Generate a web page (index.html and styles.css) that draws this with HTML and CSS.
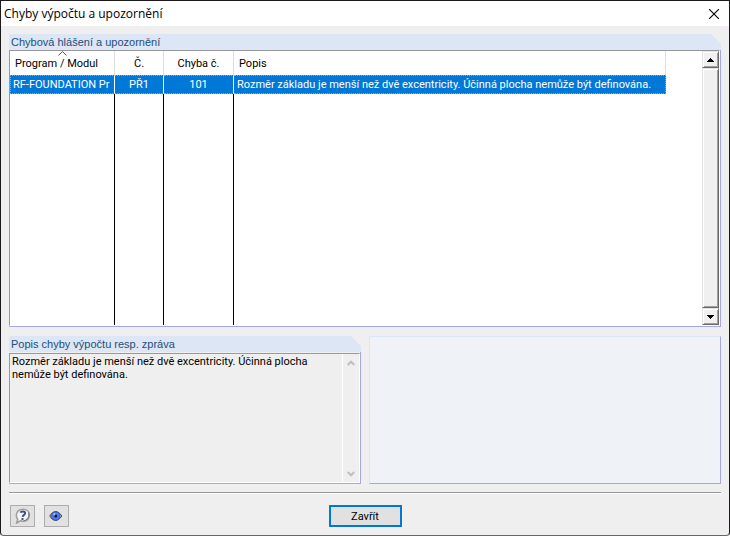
FILE: index.html
```
<!DOCTYPE html>
<html lang="cs">
<head>
	<meta charset="UTF-8" />
	<meta name="viewport" content="width=device-width, initial-scale=1.0" />
	<title>Chyby výpočtu a upozornění</title>
	<link rel="stylesheet" href="styles.css">
</head>
<body>
	<div class="dialog">
		<header class="titlebar">
			<h1>Chyby výpočtu a upozornění</h1>
			<button type="button" class="btn-close" aria-label="Zavřít okno">
				<svg viewBox="0 0 10 10" width="10" height="10"><path d="M0 0L10 10M10 0L0 10" stroke="#000" stroke-width="1.1"/></svg>
			</button>
		</header>

		<main class="content">
			<section class="panel panel-list">
				<h2 class="panel-title">Chybová hlášení a upozornění</h2>
				<div class="list">
					<div class="list-view">
						<table class="errors">
							<colgroup>
								<col class="col-program"><col class="col-no"><col class="col-error"><col class="col-desc">
							</colgroup>
							<thead>
								<tr>
									<th class="left sorted">Program / Modul
										<svg class="sort" viewBox="0 0 9 5" width="9" height="5"><path d="M.5 4.5L4.5 .5L8.5 4.5" fill="none" stroke="#555"/></svg>
									</th>
									<th>Č.</th>
									<th>Chyba č.</th>
									<th class="left">Popis</th>
								</tr>
							</thead>
							<tbody>
								<tr class="selected">
									<td class="left">RF-FOUNDATION Pr</td>
									<td>PŘ1</td>
									<td>101</td>
									<td class="left">Rozměr základu je menší než dvě excentricity. Účinná plocha nemůže být definována.</td>
								</tr>
								<tr class="filler"><td></td><td></td><td></td><td></td></tr>
							</tbody>
						</table>
					</div>
					<div class="scrollbar">
						<button type="button" class="raised" aria-label="Nahoru">
							<svg viewBox="0 0 7 4" width="7" height="4" shape-rendering="crispEdges"><path d="M3 0h1v1h1v1h1v1h1v1H0V3h1V2h1V1h1z"/></svg>
						</button>
						<div class="thumb raised"></div>
						<button type="button" class="raised" aria-label="Dolů">
							<svg viewBox="0 0 7 4" width="7" height="4" shape-rendering="crispEdges"><path d="M0 0h7v1H6v1H5v1H4v1H3V3H2V2H1V1H0z"/></svg>
						</button>
					</div>
				</div>
			</section>

			<div class="details">
				<section class="panel panel-message">
					<h2 class="panel-title">Popis chyby výpočtu resp. zpráva</h2>
					<div class="message">
						<p>Rozměr základu je menší než dvě excentricity. Účinná plocha nemůže být definována.</p>
						<div class="message-scroll">
							<svg viewBox="0 0 8 6" width="8" height="6"><path d="M.7 5L4 1.7L7.3 5" fill="none" stroke="#bfbfbf" stroke-width="2"/></svg>
							<svg viewBox="0 0 8 6" width="8" height="6"><path d="M.7 1L4 4.3L7.3 1" fill="none" stroke="#bfbfbf" stroke-width="2"/></svg>
						</div>
					</div>
				</section>
				<section class="preview"></section>
			</div>
		</main>

		<footer class="footer">
			<div class="tools">
				<button type="button" class="btn-tool" aria-label="Nápověda">
					<svg viewBox="0 0 16 16" width="16" height="16">
						<path d="M8 1.200C11.700 1.200 14.300 3.800 14.300 7.300S11.700 13.300 8 13.300C7 13.300 6.100 13.100 5.300 12.800L1.700 15L2.700 11.200C1.700 10.200 1.300 8.900 1.300 7.300C1.300 3.800 4.200 1.200 8 1.200Z" fill="#f6f6f6" stroke="#a0a0a0" stroke-width="1.600"/>
						<path d="M13.800 4.500C15 8 13 12.300 8.500 13" fill="none" stroke="#777" stroke-width="1.200"/>
						<path d="M5.400 4.700C6.100 3.200 10.200 3 10.100 5.300C10 7 8 6.800 7.600 8.900" fill="none" stroke="#3a5293" stroke-width="2"/>
						<rect x="6.500" y="10" width="2" height="2" fill="#3a5293"/>
					</svg>
				</button>
				<button type="button" class="btn-tool" aria-label="Zobrazit">
					<svg viewBox="0 0 16 16" width="16" height="16">
						<path d="M.8 8C3.800 2.200 9.200 2.200 12.800 8C9.200 13.800 3.800 13.800 .8 8Z" fill="#c0c0c0" stroke="#444" stroke-width="1"/>
						<circle cx="6.800" cy="8" r="4.200" fill="#4a7df2" stroke="#2a4aae" stroke-width=".8"/>
						<circle cx="6.800" cy="8" r="1.500" fill="#0b1238"/>
						<circle cx="5.300" cy="6.200" r="1" fill="#b9d0ff"/>
					</svg>
				</button>
			</div>
			<button type="button" class="btn-primary">Zavřít</button>
		</footer>
	</div>
</body>
</html>
```

FILE: styles.css
```
*{
	box-sizing: border-box;
}
body{
	margin: 0;
	background: #efefef;
	color: #000;
	font: 11px/13px Roboto, sans-serif;
}
h1, h2, p{
	margin: 0;
	font-weight: normal;
}
button{
	display: flex;
	align-items: center;
	justify-content: center;
	padding: 0;
	font: inherit;
	color: inherit;
}
.dialog{
	display: flex;
	flex-direction: column;
	min-height: 100vh;
	border: 1px solid #1c1a1c;
	border-bottom-color: #666;
	border-radius: 0 0 4px 4px;
}

/* title bar */
.titlebar{
	display: flex;
	align-items: center;
	justify-content: space-between;
	height: 25px;
	padding: 0 10px 0 3px;
	background: #fff;
}
.titlebar h1{
	font: 12px/16px "Open Sans", sans-serif;
}
.btn-close{
	border: 0;
	background: none;
}

.content{
	display: flex;
	flex: 1;
	flex-direction: column;
	gap: 9px;
	padding: 8px 8px 0;
}

/* panels */
.panel{
	display: flex;
	flex-direction: column;
	background: linear-gradient(#a6a6ec, #a6a6ec) right bottom / 1px calc(100% - 10px) no-repeat;
	border-bottom: 1px solid #a6a6ec;
}
.panel-title{
	height: 16px;
	padding: 1px 2px 0;
	background: #dce6f4;
	clip-path: polygon(0 0, calc(100% - 10px) 0, 100% 10px, 100% 100%, 0 100%);
	color: #1f4e79;
	font: 11px/15px "Liberation Sans", sans-serif;
}
.panel-list{
	flex: 1;
}
.list{
	display: flex;
	flex: 1;
	margin-right: 1px;
	border: 1px solid #999;
	border-right: 1px solid #fff;
	border-bottom-color: #fff;
	background: #fff;
}
.list-view{
	display: flex;
	flex: 1;
	overflow: hidden;
}
.errors{
	width: 656px;
	table-layout: fixed;
	border-spacing: 0;
}
.col-program{
	width: 105px;
}
.col-no{
	width: 49px;
}
.col-error{
	width: 70px;
}
.errors th,
.errors td{
	padding: 0 3px;
	overflow: hidden;
	font-weight: normal;
	text-align: center;
	white-space: nowrap;
}
.errors th{
	position: relative;
	height: 24px;
	border-right: 1px solid #dedede;
}
.errors td{
	border-right: 1px solid #000;
}
.errors td:last-child{
	border-right: 0;
}
.errors .left{
	text-align: left;
}
.errors th.left{
	padding-left: 5px;
}
.sort{
	position: absolute;
	top: 0;
	left: 48px;
}
.errors .selected td{
	height: 19px;
	background: #0078d7;
	border-top: 1px dotted #e39a50;
	border-bottom: 1px dotted #e39a50;
	border-right-color: #fff;
	color: #fff;
}
.errors .selected td:first-child{
	border-left: 1px dotted #e39a50;
	padding-left: 2px;
}
.errors .selected td:last-child{
	border-right: 1px dotted #e39a50;
}

/* list scrollbar */
.scrollbar{
	display: flex;
	flex-direction: column;
	width: 17px;
	background: #f0f0f0;
}
.raised{
	height: 17px;
	background: #f0f0f0;
	border: 1px solid;
	border-color: #e3e3e3 #696969 #696969 #e3e3e3;
	box-shadow: inset 1px 1px #fff, inset -1px -1px #a0a0a0;
}
.thumb{
	flex: 1;
}

/* lower part */
.details{
	display: grid;
	grid-template-columns: 1fr 1fr;
	gap: 8px;
	height: 148px;
}
.message{
	display: flex;
	flex: 1;
	margin: 1px 1px 0 0;
	border: 1px solid #999;
	border-right-color: #fff;
	border-bottom-color: #fff;
	background: #efefef;
}
.message p{
	flex: 1;
	padding: 1px 2px;
}
.message-scroll{
	display: flex;
	flex-direction: column;
	align-items: center;
	justify-content: space-between;
	width: 17px;
	padding: 6px 0 5px;
	border-left: 1px solid #fff;
}
.preview{
	background: #eff3f8;
	border: 1px solid #dce6f4;
	border-right-color: #a6a6ec;
	border-bottom-color: #a6a6ec;
}

/* footer */
.footer{
	display: grid;
	grid-template-columns: 1fr auto 1fr;
	align-items: center;
	margin: 8px 8px 0;
	padding: 12px 0 8px;
	border-top: 1px solid #999;
	box-shadow: inset 0 1px #fff;
}
.tools{
	display: flex;
	gap: 9px;
	padding-left: 1px;
}
.btn-tool{
	width: 25px;
	height: 22px;
	background: #e1e1e1;
	border: 1px solid #adadad;
}
.btn-primary{
	width: 73px;
	height: 22px;
	background: #e1e1e1;
	border: 2px solid #0078d7;
}
```
